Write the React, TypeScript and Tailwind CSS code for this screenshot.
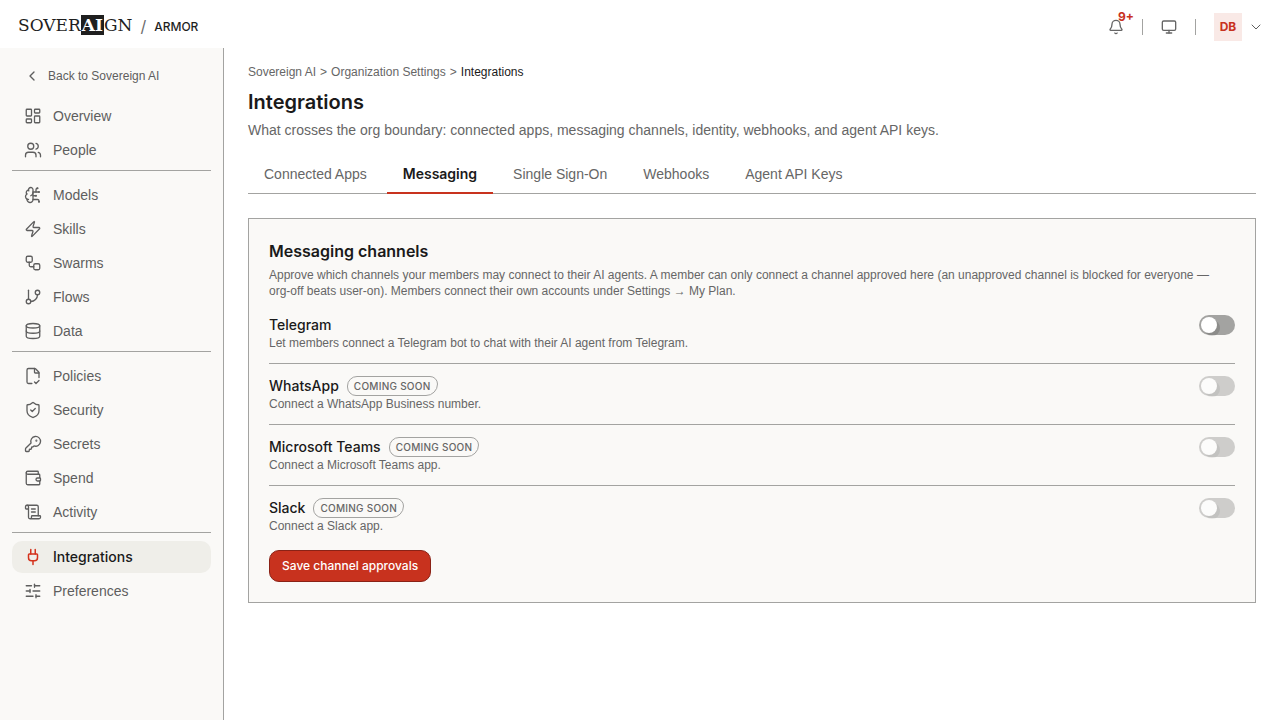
import { useState } from "react";
import {
  Bell,
  BrainCircuit,
  ChevronDown,
  ChevronLeft,
  Database,
  FileCheck2,
  GitBranch,
  KeyRound,
  LayoutDashboard,
  Monitor,
  Plug,
  ScrollText,
  ShieldCheck,
  SlidersHorizontal,
  Users,
  Wallet,
  Workflow,
  Zap,
  type LucideIcon,
} from "lucide-react";

type NavItem = { label: string; icon: LucideIcon };

const NAV_GROUPS: NavItem[][] = [
  [
    { label: "Overview", icon: LayoutDashboard },
    { label: "People", icon: Users },
  ],
  [
    { label: "Models", icon: BrainCircuit },
    { label: "Skills", icon: Zap },
    { label: "Swarms", icon: Workflow },
    { label: "Flows", icon: GitBranch },
    { label: "Data", icon: Database },
  ],
  [
    { label: "Policies", icon: FileCheck2 },
    { label: "Security", icon: ShieldCheck },
    { label: "Secrets", icon: KeyRound },
    { label: "Spend", icon: Wallet },
    { label: "Activity", icon: ScrollText },
  ],
  [
    { label: "Integrations", icon: Plug },
    { label: "Preferences", icon: SlidersHorizontal },
  ],
];

const TABS = ["Connected Apps", "Messaging", "Single Sign-On", "Webhooks", "Agent API Keys"];

const CHANNELS = [
  {
    id: "telegram",
    name: "Telegram",
    description: "Let members connect a Telegram bot to chat with their AI agent from Telegram.",
    available: true,
  },
  {
    id: "whatsapp",
    name: "WhatsApp",
    description: "Connect a WhatsApp Business number.",
    available: false,
  },
  {
    id: "teams",
    name: "Microsoft Teams",
    description: "Connect a Microsoft Teams app.",
    available: false,
  },
  {
    id: "slack",
    name: "Slack",
    description: "Connect a Slack app.",
    available: false,
  },
];

function Header() {
  return (
    <header className="flex h-12 items-center justify-between bg-white pt-1.5 pr-4 pl-4.5 font-['Inter',sans-serif]">
      <div className="flex items-center">
        <a
          href="#"
          aria-label="Soveraign"
          className="flex items-center pb-1 font-['DejaVu_Serif',serif] text-[17px] leading-5 text-[#1f1f1f]"
        >
          <span>SOVER</span>
          <span className="bg-[#1f1f1f] px-px font-bold text-white">AI</span>
          <span>GN</span>
        </a>
        <span className="mx-2 pb-0.5 text-base text-[#6b6b6b]">/</span>
        <a href="#" className="text-xs font-medium text-[#1f1f1f]">
          ARMOR
        </a>
      </div>

      <div className="flex items-center">
        <button type="button" aria-label="Notifications" className="relative p-0.5 text-[#666666]">
          <Bell className="h-4 w-4" strokeWidth={2} />
          <span className="absolute -top-2 left-3 text-xs leading-4 font-bold text-[#c8321e]">9+</span>
        </button>
        <span className="mx-4 h-4 w-px bg-[#a3a3a1]" />
        <button type="button" aria-label="Display" className="p-0.5 text-[#666666]">
          <Monitor className="h-4 w-4" strokeWidth={2} />
        </button>
        <span className="mx-4 h-4 w-px bg-[#a3a3a1]" />
        <button type="button" aria-label="Account" className="ml-0.5 flex items-center gap-1.5 text-[#5e5e5e]">
          <span className="flex h-7 w-7 items-center justify-center bg-[#f9e9e6] text-xs font-bold text-[#c8321e]">
            DB
          </span>
          <ChevronDown className="h-4 w-4" strokeWidth={1.5} />
        </button>
      </div>
    </header>
  );
}

function Sidebar() {
  return (
    <aside className="w-56 shrink-0 border-r border-[#a3a3a1] bg-[#faf9f7] px-3 pt-3">
      <a href="#" className="mb-2 flex h-8 items-center gap-2 px-3 text-xs text-[#5e5e5e]">
        <ChevronLeft className="h-4 w-4" strokeWidth={2} />
        Back to Sovereign AI
      </a>
      <nav>
        {NAV_GROUPS.map((group, i) => (
          <ul
            key={group[0].label}
            className={i > 0 ? "mt-1 space-y-0.5 border-t border-[#a3a3a1] pt-2" : "space-y-0.5"}
          >
            {group.map(({ label, icon: Icon }) => {
              const active = label === "Integrations";
              return (
                <li key={label}>
                  <a
                    href="#"
                    aria-current={active ? "page" : undefined}
                    className={
                      active
                        ? "flex h-8 items-center gap-[11px] rounded-[10px] bg-[#efeee9] px-3 font-['Inter',sans-serif] text-sm font-medium text-[#1a1a1a]"
                        : "flex h-8 items-center gap-[11px] px-3 text-sm text-[#5e5e5e]"
                    }
                  >
                    <Icon
                      className={active ? "h-[18px] w-[18px] text-[#d4321c]" : "h-[18px] w-[18px]"}
                      strokeWidth={active ? 2 : 1.75}
                    />
                    {label}
                  </a>
                </li>
              );
            })}
          </ul>
        ))}
      </nav>
    </aside>
  );
}

function ChannelRow({ channel }: { channel: (typeof CHANNELS)[number] }) {
  const [on, setOn] = useState(false);
  const { id, name, description, available } = channel;

  return (
    <li className="flex items-start justify-between gap-4 border-b border-[#a3a3a1] py-3 first:pt-0 last:border-b-0 last:pb-0">
      <div>
        <div className="flex h-5 items-center gap-2 font-['Inter',sans-serif]">
          <label htmlFor={id} className="text-sm font-medium text-[#1a1a1a]">
            {name}
          </label>
          {!available && (
            <span className="flex h-5 items-center rounded-[10px_8px_12px_9px] border border-[#a3a3a1] px-1.5 text-[10px] font-medium tracking-wide text-[#666666] uppercase">
              Coming soon
            </span>
          )}
        </div>
        <p className="text-xs text-[#666666]">{description}</p>
      </div>
      <input
        id={id}
        type="checkbox"
        role="switch"
        checked={on}
        disabled={!available}
        onChange={(e) => setOn(e.target.checked)}
        className="flex h-5 w-9 shrink-0 appearance-none items-center rounded-full bg-[#a3a3a1] px-0.5 before:h-4 before:w-4 before:rounded-full before:bg-white before:shadow-[3px_3px_0_rgba(0,0,0,0.14)] checked:justify-end checked:bg-[#c8321e] disabled:opacity-50"
      />
    </li>
  );
}

export default function App() {
  const [tab, setTab] = useState("Messaging");

  return (
    <div className="flex min-h-screen flex-col bg-white font-['Liberation_Sans',sans-serif] text-[#1a1a1a]">
      <Header />
      <div className="flex flex-1">
        <Sidebar />
        <main className="min-w-0 flex-1 px-6 pt-4 pb-6">
          <nav aria-label="Breadcrumb" className="flex gap-1 text-xs text-[#666666]">
            <a href="#">Sovereign AI</a>
            <span>&gt;</span>
            <a href="#">Organization Settings</a>
            <span>&gt;</span>
            <span aria-current="page" className="text-[#1a1a1a]">
              Integrations
            </span>
          </nav>
          <h1 className="mt-2 font-['Inter',sans-serif] text-xl font-semibold">Integrations</h1>
          <p className="mt-1 text-sm text-[#666666]">
            What crosses the org boundary: connected apps, messaging channels, identity, webhooks, and agent API keys.
          </p>

          <div role="tablist" className="mt-4 flex gap-1 shadow-[inset_0_-1px_0_#a3a3a1]">
            {TABS.map((name) => (
              <button
                key={name}
                type="button"
                role="tab"
                aria-selected={tab === name}
                onClick={() => setTab(name)}
                className={
                  tab === name
                    ? "border-b-2 border-[#c8321e] px-4 py-2 font-['Inter',sans-serif] text-sm font-semibold text-[#1a1a1a]"
                    : "border-b-2 border-transparent px-4 py-2 text-sm text-[#666666]"
                }
              >
                {name}
              </button>
            ))}
          </div>

          <section className="mt-6 border border-[#a3a3a1] bg-[#faf9f7] p-5">
            <h2 className="font-['Inter',sans-serif] text-base font-semibold">Messaging channels</h2>
            <p className="mt-1 text-xs text-[#666666]">
              Approve which channels your members may connect to their AI agents. A member can only connect a channel
              approved here (an unapproved channel is blocked for everyone —{" "}
              <span className="whitespace-nowrap">org-off</span> beats user-on). Members connect their own accounts
              under Settings → My Plan.
            </p>
            <ul className="mt-4">
              {CHANNELS.map((channel) => (
                <ChannelRow key={channel.id} channel={channel} />
              ))}
            </ul>
            <button
              type="button"
              className="mt-4 h-8 rounded-[10px] border border-[#8a2216] bg-[#c8321e] px-3 font-['Inter',sans-serif] text-xs font-medium text-white"
            >
              Save channel approvals
            </button>
          </section>
        </main>
      </div>
    </div>
  );
}
